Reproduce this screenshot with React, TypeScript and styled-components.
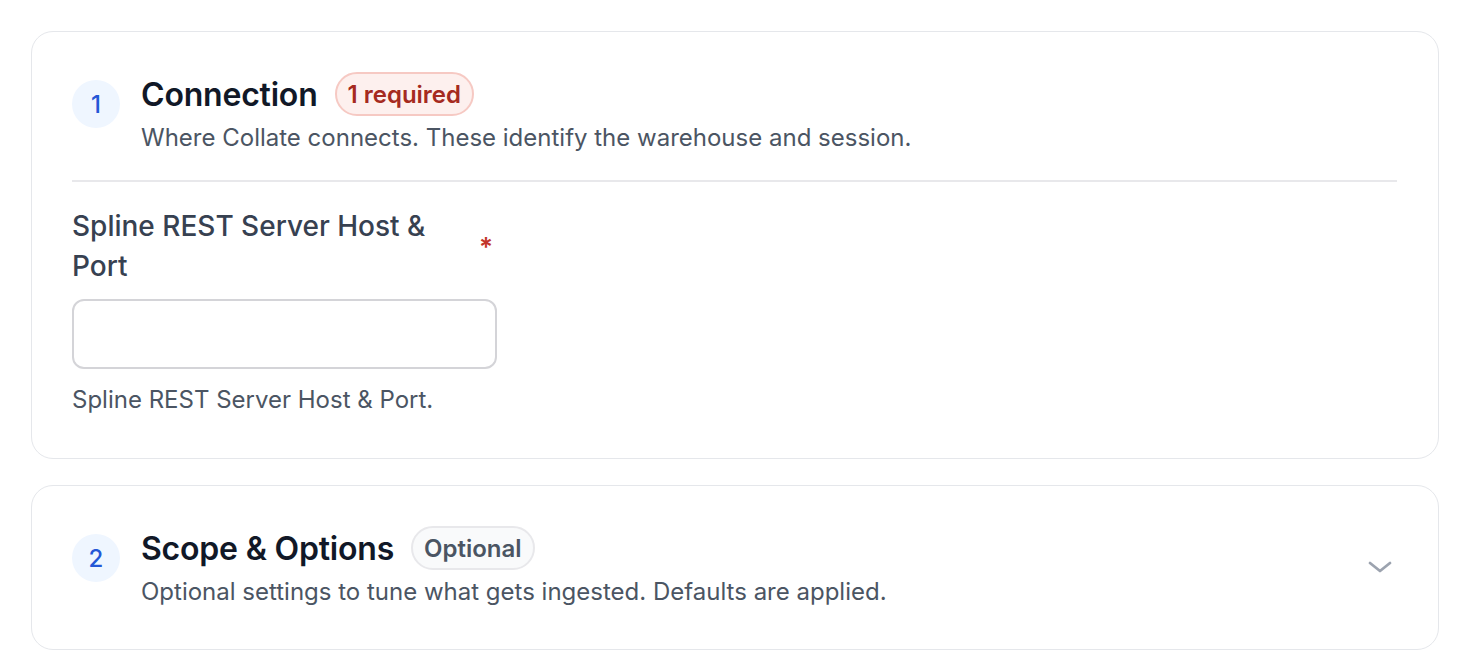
import styled, { createGlobalStyle } from "styled-components";

const GlobalStyle = createGlobalStyle`
  html, body {
    margin: 0;
    padding: 0;
    background: #ffffff;
    font-family: Inter, "Noto Sans", sans-serif;
    -webkit-font-smoothing: antialiased;
  }
`;

const Page = styled.div`
  padding: 31px 21px 0 31px;
  display: flex;
  flex-direction: column;
  gap: 26px;
`;

const Card = styled.section`
  border: 1px solid #e5e7eb;
  border-radius: 22px;
  padding: 40px 41px 42px 40px;
  background: #fff;
`;

const Header = styled.div`
  display: flex;
  align-items: center;
  gap: 21px;
`;

const Step = styled.div`
  width: 48px;
  height: 48px;
  flex: none;
  align-self: flex-start;
  margin-top: 8px;
  border-radius: 50%;
  background: #eff6ff;
  color: #2457d6;
  font-size: 24px;
  font-weight: 500;
  display: flex;
  align-items: center;
  justify-content: center;
`;

const HeadText = styled.div`
  flex: 1;
  display: flex;
  flex-direction: column;
  gap: 7px;
`;

const TitleRow = styled.div`
  display: flex;
  align-items: center;
  gap: 17px;
  height: 44px;
`;

const Title = styled.h2`
  margin: 0;
  font-size: 32px;
  font-weight: 600;
  color: #111827;
  letter-spacing: -0.2px;
`;

const Badge = styled.span<{ tone: "danger" | "muted" }>`
  display: inline-flex;
  align-items: center;
  box-sizing: border-box;
  height: 44px;
  padding: 0 11px;
  border-radius: 22px;
  font-size: 24px;
  font-weight: 600;
  border: 2px solid ${p => (p.tone === "danger" ? "#f6c9c3" : "#e8e8eb")};
  background: ${p => (p.tone === "danger" ? "#fdf0ee" : "#f9fafb")};
  color: ${p => (p.tone === "danger" ? "#a52a20" : "#4b5563")};
`;

const Desc = styled.p`
  margin: 0;
  font-size: 24px;
  line-height: 30px;
  color: #4b5563;
`;

const Chevron = styled.div`
  width: 28px;
  height: 28px;
  flex: none;
  margin-right: 3px;
  color: #9ca3af;
  display: flex;
  align-items: center;
  justify-content: center;
`;

const Divider = styled.hr`
  border: none;
  border-top: 2px solid #e8e8eb;
  margin: 27px 0 24px 0;
`;

const Field = styled.div`
  width: 425px;
  display: flex;
  flex-direction: column;
`;

const LabelRow = styled.div`
  display: flex;
  align-items: center;
  justify-content: space-between;
`;

const Label = styled.label`
  width: 390px;
  font-size: 28px;
  line-height: 40px;
  color: #374151;
  font-weight: 500;
`;

const Required = styled.span`
  color: #c2352a;
  font-size: 26px;
  font-weight: 600;
  margin-right: 4px;
`;

const Input = styled.input`
  margin-top: 13px;
  height: 70px;
  box-sizing: border-box;
  border: 2px solid #d4d4d8;
  border-radius: 12px;
  padding: 0 16px;
  font: inherit;
  font-size: 24px;
  outline: none;
`;

const Help = styled.div`
  margin-top: 15px;
  font-size: 24px;
  line-height: 32px;
  color: #4b5563;
`;

export default function App() {
  return (
    <>
      <GlobalStyle />
      <Page>
        <Card>
          <Header>
            <Step>1</Step>
            <HeadText>
              <TitleRow>
                <Title>Connection</Title>
                <Badge tone="danger">1 required</Badge>
              </TitleRow>
              <Desc>Where Collate connects. These identify the warehouse and session.</Desc>
            </HeadText>
          </Header>
          <Divider />
          <Field>
            <LabelRow>
              <Label htmlFor="host">Spline REST Server Host &amp; Port</Label>
              <Required>*</Required>
            </LabelRow>
            <Input id="host" />
            <Help>Spline REST Server Host &amp; Port.</Help>
          </Field>
        </Card>
        <Card>
          <Header>
            <Step>2</Step>
            <HeadText>
              <TitleRow>
                <Title>Scope &amp; Options</Title>
                <Badge tone="muted">Optional</Badge>
              </TitleRow>
              <Desc>Optional settings to tune what gets ingested. Defaults are applied.</Desc>
            </HeadText>
            <Chevron>
              <svg width="28" height="28" viewBox="0 0 28 28" fill="none" stroke="currentColor" strokeWidth="2.8" strokeLinecap="round" strokeLinejoin="round">
                <path d="M4 10l10 8 10-8" />
              </svg>
            </Chevron>
          </Header>
        </Card>
      </Page>
    </>
  );
}
